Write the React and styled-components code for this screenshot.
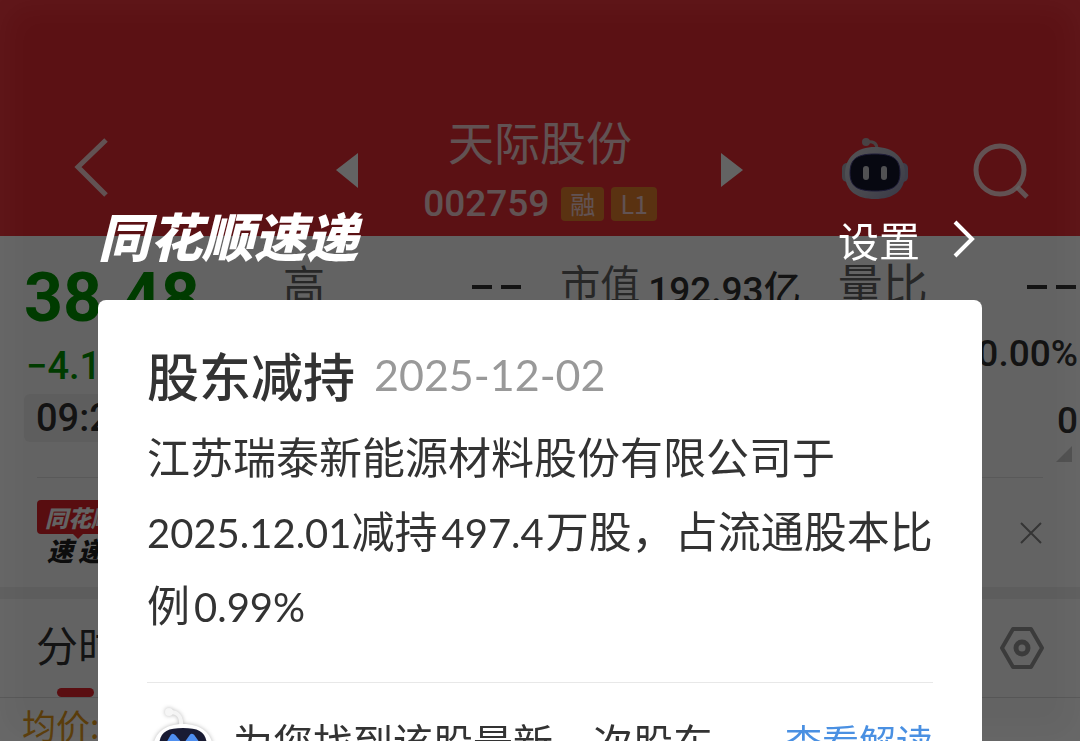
import React from 'react'
import styled, { createGlobalStyle } from 'styled-components';

const GlobalStyle = createGlobalStyle`
  * {
    box-sizing: border-box;
  }

  body {
    margin: 0;
    background: #fff;
    font-family: "Noto Sans CJK SC", sans-serif;
  }

  button {
    padding: 0;
    border: none;
    background: none;
    color: inherit;
    font: inherit;
    cursor: pointer;
  }

  svg {
    display: block;
    flex: none;
  }
`;

const Page = styled.div`
  height: 100vh;
  overflow: hidden;
  color: #333;
`;

const Header = styled.header`
  height: 236px;
  padding-top: 102px;
  display: grid;
  grid-template-columns: 1fr auto 1fr;
  align-items: center;
  background: #ea2c34;
  color: #fff;
`;

const HeaderLeft = styled.div`
  padding-left: 74px;
`;

const HeaderRight = styled.div`
  display: flex;
  justify-content: flex-end;
  align-items: center;
  gap: 62px;
  padding-right: 50px;
`;

const Switcher = styled.div`
  width: 408px;
  display: flex;
  justify-content: space-between;
  align-items: center;
`;

const Stock = styled.div`
  padding-top: 8px;
  text-align: center;
  opacity: 0.8;
`;

const StockName = styled.h1`
  margin: 0;
  font-size: 46px;
  font-weight: 400;
  line-height: 60px;
`;

const StockCode = styled.div`
  display: flex;
  align-items: center;
  gap: 7px;
  font-family: Roboto, sans-serif;
  font-size: 37px;
  font-weight: 500;
  line-height: 68px;
`;

const Tag = styled.span`
  height: 34px;
  padding: 0 9px;
  margin-left: ${props => props.$first ? '5px' : '0'};
  border-radius: 4px;
  background: #e8962c;
  font-family: "Noto Sans CJK SC", sans-serif;
  font-size: 25px;
  font-weight: 400;
  line-height: 33px;
`;

const Quote = styled.section`
  position: relative;
  display: grid;
  grid-template-columns: 222px 1fr 1fr 1fr;
  gap: 37px;
  height: 241px;
  padding: 17px 2px 0 24px;
`;

const PriceColumn = styled.div`
  color: #009900;
`;

const Price = styled.div`
  font-family: Roboto, sans-serif;
  font-size: 68px;
  font-weight: 700;
  line-height: 90px;
`;

const Change = styled.div`
  padding-left: 2px;
  font-family: Roboto, sans-serif;
  font-size: 38px;
  font-weight: 500;
  line-height: 46px;
`;

const Time = styled.div`
  height: 48px;
  margin-top: 5px;
  padding-left: 12px;
  border-radius: 6px;
  background: #f2f2f2;
  color: #333;
  font-family: Roboto, sans-serif;
  font-size: 38px;
  font-weight: 500;
  line-height: 48px;
`;

const Field = styled.div`
  display: flex;
  align-items: center;
  height: 67px;
  white-space: nowrap;
`;

const Label = styled.span`
  padding-bottom: 9px;
  color: #666;
  font-size: ${props => props.$size || 40}px;
`;

const Value = styled.span`
  margin-left: auto;
  color: #333;
  font-family: Roboto, "Noto Sans CJK SC", sans-serif;
  font-size: 37px;
  font-weight: 500;
`;

const Dashes = styled.span`
  display: flex;
  gap: 9px;
  margin: 0 2px 0 auto;

  &::before,
  &::after {
    content: '';
    width: 20px;
    height: 4px;
    background: #333;
  }
`;

const Corner = styled.svg`
  position: absolute;
  right: 8px;
  bottom: 15px;
`;

const Notice = styled.section`
  display: flex;
  justify-content: space-between;
  align-items: center;
  height: 110px;
  margin: 0 37px;
  border-top: 1px solid #e4e4e4;
`;

const NoticeLogo = styled.div`
  font-style: italic;
  font-weight: 900;
`;

const NoticeTag = styled.div`
  position: relative;
  padding: 0 8px;
  border-radius: 4px;
  background: #e2232b;
  color: #fff;
  font-size: 23px;
  line-height: 34px;

  &::after {
    content: '';
    position: absolute;
    top: 100%;
    left: 36px;
    border: 5px solid transparent;
    border-top-color: #e2232b;
  }
`;

const NoticeName = styled.div`
  display: flex;
  gap: 5px;
  padding-left: 10px;
  color: #222;
  font-size: 26px;
  line-height: 32px;
`;

const Tabs = styled.nav`
  display: flex;
  justify-content: space-between;
  height: 111px;
  padding: 0 36px;
  border-top: 12px solid #f0f0f0;
  border-bottom: 1px solid #ddd;
`;

const Tab = styled.button`
  display: flex;
  flex-direction: column;
  justify-content: space-between;
  font-size: 42px;
  line-height: 89px;

  &::after {
    content: '';
    flex: none;
    width: 37px;
    height: 9px;
    margin-left: 21px;
    border-radius: 5px;
    background: #e8262e;
  }
`;

const Average = styled.div`
  padding-left: 22px;
  color: #e59a1a;
  font-size: 34px;
  line-height: 54px;
`;

const Overlay = styled.div`
  position: fixed;
  inset: 0;
  overflow: hidden;
  padding: 190px 98px 0;
  background: rgba(0, 0, 0, 0.61);
  box-shadow: inset 0 0 36px rgba(255, 255, 255, 0.04);
`;

const OverlayBar = styled.div`
  display: flex;
  justify-content: space-between;
  align-items: center;
  height: 98px;
  margin-bottom: 12px;
  padding-right: 6px;
  color: #fff;
`;

const Brand = styled.div`
  height: 98px;
  font-size: 52px;
  font-style: italic;
  font-weight: 900;
  line-height: 90px;
`;

const Settings = styled.button`
  display: flex;
  align-items: center;
  gap: 32px;
  font-size: 41px;
  line-height: 60px;
`;

const Card = styled.article`
  padding: 36px 49px;
  border-radius: 8px;
  background: #fff;
  color: #333;
`;

const CardTitle = styled.h2`
  display: flex;
  align-items: center;
  gap: 19px;
  margin: 0 0 4px;
  font-size: 52px;
  font-weight: 500;
  line-height: 78px;
`;

const CardDate = styled.time`
  color: #999;
  font-family: Lato, sans-serif;
  font-size: 43px;
  font-weight: 400;
`;

const CardText = styled.p`
  margin: 0 -6px 42px 0;
  font-size: 43px;
  line-height: 74px;
`;

const Num = styled.span`
  margin: 0 2px 0 4px;
  font-family: Lato, sans-serif;
  font-size: 40px;
  line-height: 1;

  &:first-of-type {
    margin: 0;
  }
`;

const CardFooter = styled.div`
  display: flex;
  align-items: center;
  padding-top: 18px;
  border-top: 1px solid #e8e8e8;
  font-size: 40px;
  line-height: 80px;
`;

const FooterText = styled.span`
  padding-left: 12px;
  white-space: nowrap;
`;

const FooterLink = styled.a`
  margin-left: auto;
  color: #4a90e2;
  font-size: 37px;
  text-decoration: none;
  white-space: nowrap;
`;

function Robot() {
  return (
    <svg width="70" height="70" viewBox="0 0 70 70" fill="none">
      <defs>
        <linearGradient id="helmet" x1="0" y1="0" x2="1" y2="1">
          <stop offset="0" stopColor="#d6d6dc" />
          <stop offset="0.6" stopColor="#b8b8c8" />
          <stop offset="1" stopColor="#8f8fb4" />
        </linearGradient>
      </defs>
      <path d="M37 14 C37 8 33 6 27 7" stroke="#b9a9b0" strokeWidth="3" />
      <circle cx="26" cy="7" r="4" fill="#b9a9b0" />
      <rect x="2" y="28" width="12" height="19" rx="5" fill="#a9a9b8" />
      <rect x="56" y="28" width="12" height="19" rx="5" fill="#9f9fbc" />
      <path d="M35 12 C53 12 65 22 65 39 C65 56 53 64 35 64 C17 64 5 56 5 39 C5 22 17 12 35 12 Z" fill="url(#helmet)" />
      <path d="M35 19 C53 19 60 24 60 38 C60 51 53 56 35 56 C17 56 10 51 10 38 C10 24 17 19 35 19 Z" fill="#12162e" stroke="#4d4690" />
      <rect x="23" y="31" width="6" height="14" rx="3" fill="#d0d0d6" />
      <rect x="41" y="31" width="6" height="14" rx="3" fill="#d0d0d6" />
    </svg>
  )
}

function HappyRobot() {
  return (
    <svg width="74" height="74" viewBox="0 0 74 74" fill="none">
      <g filter="drop-shadow(0 0 2px #b8b8b8)">
        <path d="M23 8 C31 8 35 13 34 22" stroke="#f4f4f4" strokeWidth="4" />
        <circle cx="22" cy="8" r="4" fill="#f6f6f6" />
        <path d="M36 20 C55 20 66 30 66 46 C66 62 55 70 36 70 C17 70 6 62 6 46 C6 30 17 20 36 20 Z" fill="#fff" />
      </g>
      <path d="M36 24 C54 24 60 29 60 44 C60 57 54 62 36 62 C18 62 12 57 12 44 C12 29 18 24 36 24 Z" fill="#191b33" />
      <path d="M22 40 L26 33 L32 40 M40 40 L45 33 L50 40" stroke="#4f8ff0" strokeWidth="6" strokeLinejoin="round" />
    </svg>
  )
}

function StockHeader() {
  return (
    <Header>
      <HeaderLeft>
        <button aria-label="返回">
          <svg width="36" height="60" viewBox="0 0 36 60" fill="none" stroke="#fff" strokeOpacity="0.8" strokeWidth="5">
            <path d="M32 2 L4 29 L32 57" />
          </svg>
        </button>
      </HeaderLeft>
      <Switcher>
        <button aria-label="上一只">
          <svg width="23" height="36" viewBox="0 0 23 36" fill="#fff">
            <path d="M22 1 V36 L0 18 Z" />
          </svg>
        </button>
        <Stock>
          <StockName>天际股份</StockName>
          <StockCode>002759<Tag $first>融</Tag><Tag>L1</Tag></StockCode>
        </Stock>
        <button aria-label="下一只">
          <svg width="23" height="36" viewBox="0 0 23 36" fill="#fff">
            <path d="M0 1 V35 L22 18 Z" />
          </svg>
        </button>
      </Switcher>
      <HeaderRight>
        <button aria-label="智能助手"><Robot /></button>
        <button aria-label="搜索">
          <svg width="58" height="58" viewBox="0 0 58 58" fill="none" stroke="#fff" strokeOpacity="0.8" strokeWidth="5">
            <circle cx="28" cy="29" r="24" />
            <path d="M45 46 L55 56" />
          </svg>
        </button>
      </HeaderRight>
    </Header>
  )
}

function QuotePanel() {
  return (
    <Quote>
      <PriceColumn>
        <Price>38.48</Price>
        <Change>−4.17</Change>
        <Time>09:25</Time>
      </PriceColumn>
      <div>
        <Field><Label $size={42}>高</Label><Dashes /></Field>
      </div>
      <div>
        <Field><Label>市值</Label><Value>192.93亿</Value></Field>
      </div>
      <div>
        <Field><Label $size={45}>量比</Label><Dashes /></Field>
        <Field><Value>0.00%</Value></Field>
        <Field><Value>0</Value></Field>
      </div>
      <Corner width="16" height="16" viewBox="0 0 16 16" fill="#ccc">
        <path d="M16 0 V16 H0 Z" />
      </Corner>
    </Quote>
  )
}

function App() {
  return (
    <>
      <GlobalStyle />
      <Page>
        <StockHeader />
        <QuotePanel />
        <Notice>
          <NoticeLogo>
            <NoticeTag>同花顺</NoticeTag>
            <NoticeName><span>速</span><span>递</span></NoticeName>
          </NoticeLogo>
          <button aria-label="关闭">
            <svg width="24" height="24" viewBox="0 0 24 24" fill="none" stroke="#888" strokeWidth="2">
              <path d="M2 2 L22 22 M22 2 L2 22" />
            </svg>
          </button>
        </Notice>
        <Tabs>
          <Tab>分时</Tab>
          <button aria-label="图表设置">
            <svg width="44" height="42" viewBox="0 0 44 42" fill="none" stroke="#999" strokeWidth="4" strokeLinejoin="round">
              <path d="M13 2 H31 L42 21 L31 40 H13 L2 21 Z" />
              <circle cx="22" cy="21" r="6" strokeWidth="5" />
            </svg>
          </button>
        </Tabs>
        <Average>均价:</Average>
      </Page>
      <Overlay role="dialog" aria-label="同花顺速递">
        <OverlayBar>
          <Brand>同花顺速递</Brand>
          <Settings>
            设置
            <svg width="24" height="38" viewBox="0 0 24 38" fill="none" stroke="#fff" strokeWidth="4">
              <path d="M3 2 L20 19 L3 36" />
            </svg>
          </Settings>
        </OverlayBar>
        <Card>
          <CardTitle>股东减持<CardDate>2025-12-02</CardDate></CardTitle>
          <CardText>
            江苏瑞泰新能源材料股份有限公司于<br />
            <Num>2025.12.01</Num>减持<Num>497.4</Num>万股，占流通股本比例<Num>0.99%</Num>
          </CardText>
          <CardFooter>
            <HappyRobot />
            <FooterText>为您找到该股最新一次股东</FooterText>
            <FooterLink href="#detail">查看解读</FooterLink>
          </CardFooter>
        </Card>
      </Overlay>
    </>
  )
}

export default App
